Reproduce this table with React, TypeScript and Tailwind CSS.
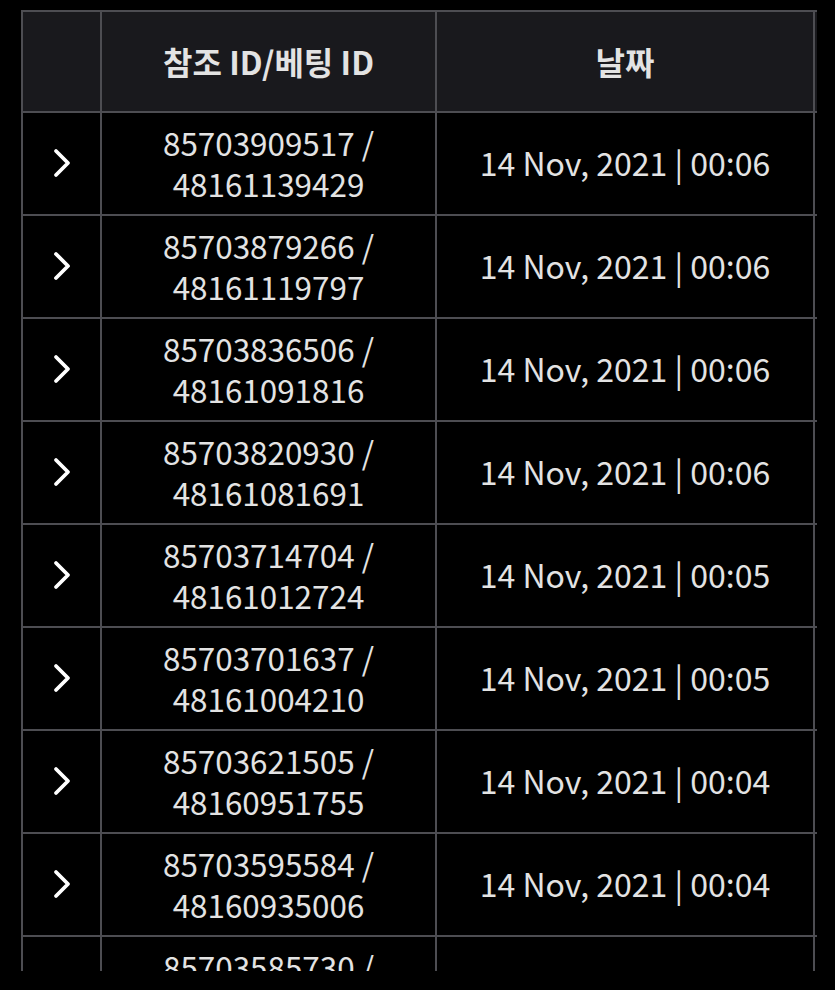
import React from 'react';

const rows = [
  { ref: '85703909517', bet: '48161139429', time: '00:06' },
  { ref: '85703879266', bet: '48161119797', time: '00:06' },
  { ref: '85703836506', bet: '48161091816', time: '00:06' },
  { ref: '85703820930', bet: '48161081691', time: '00:06' },
  { ref: '85703714704', bet: '48161012724', time: '00:05' },
  { ref: '85703701637', bet: '48161004210', time: '00:05' },
  { ref: '85703621505', bet: '48160951755', time: '00:04' },
  { ref: '85703595584', bet: '48160935006', time: '00:04' },
  { ref: '85703585730', bet: '48160929014', time: '00:04' },
];

const Chevron = () => (
  <svg className="w-[24px] h-[32px]" viewBox="0 0 24 32" fill="none" stroke="currentColor" strokeWidth={3.8} strokeLinecap="round" strokeLinejoin="round">
    <path d="M6 4l12 12-12 12" />
  </svg>
);

const App: React.FC = () => {
  return (
    <div
      className="w-[835px] h-[990px] bg-black pt-[10px] pl-[21px] text-[#e3e3e3]"
      style={{ fontFamily: '"Noto Sans CJK KR", "Noto Sans", sans-serif' }}
    >
      <div className="w-[796px] h-[961px] overflow-hidden border-l-2 border-t-2 border-[#4d4d52]">
        {/* header */}
        <div className="grid grid-cols-[79px_335px_378px] h-[101px] bg-[#19191d] border-b-2 border-[#4d4d52]">
          <div className="border-r-2 border-[#4d4d52]"></div>
          <div className="border-r-2 border-[#4d4d52] flex items-center justify-center text-[32px] font-bold pb-[2px]">
            참조 ID/베팅 ID
          </div>
          <div className="border-r-2 border-[#4d4d52] flex items-center justify-center text-[32px] font-bold pb-[2px]">
            날짜
          </div>
        </div>

        {rows.map((r) => (
          <div key={r.ref} className="grid grid-cols-[79px_335px_378px] h-[103px] border-b-2 border-[#4d4d52]">
            <div className="border-r-2 border-[#4d4d52] flex items-center justify-center text-white pb-[2px]">
              <Chevron />
            </div>
            <div className="border-r-2 border-[#4d4d52] flex flex-col items-center justify-center text-[31.4px] leading-[41px] pb-[2px]">
              <span>{r.ref} /</span>
              <span>{r.bet}</span>
            </div>
            <div className="border-r-2 border-[#4d4d52] flex items-center justify-center text-[32px] pb-[3px]">
              14 Nov, 2021 | {r.time}
            </div>
          </div>
        ))}
      </div>
    </div>
  );
};

export default App;
